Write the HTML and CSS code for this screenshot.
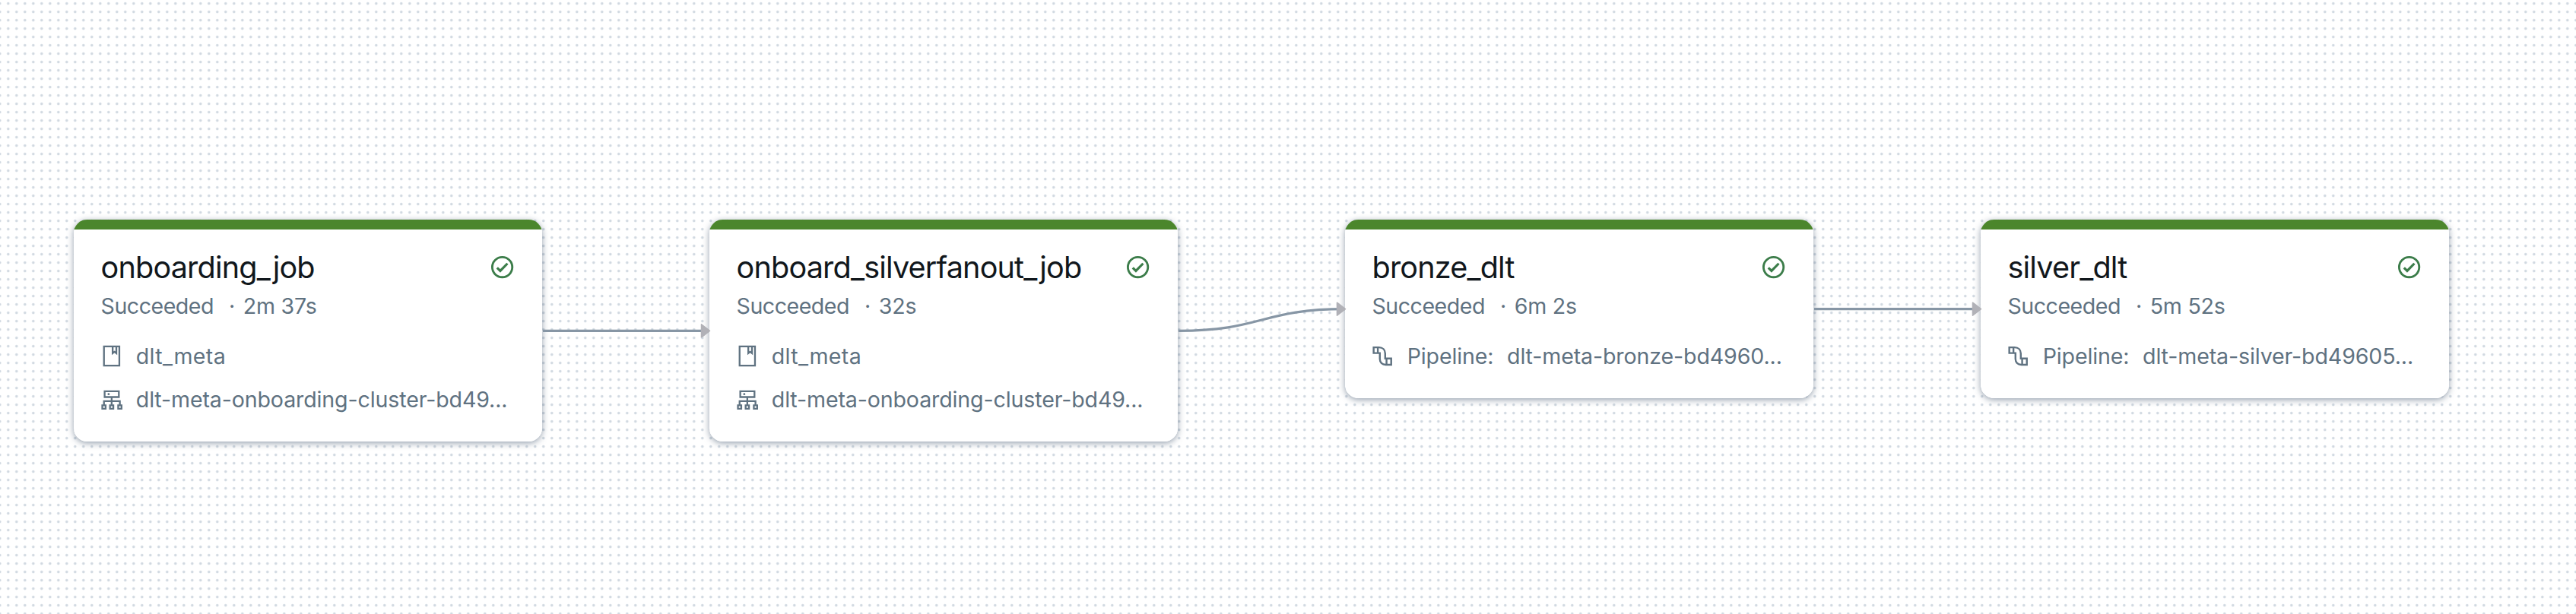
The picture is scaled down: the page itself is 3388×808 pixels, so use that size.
FILE: index.html
```
<!DOCTYPE html>
<html lang="en">
<head>
<meta charset="utf-8">
<title>Job graph</title>
<link rel="stylesheet" href="styles.css">
</head>
<body>
<svg class="defs" width="0" height="0" aria-hidden="true">
  <symbol id="check" viewBox="0 0 16 16"><circle cx="8" cy="8" r="6" fill="none" stroke="currentColor" stroke-width="1.3"/><path d="M4.9 8.3 6.8 10.2 11.1 5.8" fill="none" stroke="currentColor" stroke-width="1.45"/></symbol>
  <symbol id="notebook" viewBox="0 0 16 16"><path d="M1.7 2.2h9.2v11.5H1.7zM6.9 2.2v4.1l1.1-.9 1.1.9V2.2" fill="none" stroke="currentColor" stroke-width="1.05"/></symbol>
  <symbol id="cluster" viewBox="0 0 16 16"><path d="M2.1 2.65h8.5v3.5H2.1zM6.3 6.15v4.9M1.7 11.1V8.55h9.5v2.55M.7 11.1h2v2h-2zM5.3 11.1h2v2h-2zM10.2 11.1h2v2h-2z" fill="none" stroke="currentColor" stroke-width="1.05"/><circle cx="4.5" cy="4.4" r=".65" fill="currentColor"/></symbol>
  <symbol id="pipeline" viewBox="0 0 16 16"><path d="M1.2 2.8h3.2c2.2 0 3.7 1.5 3.7 3.700v2.900h3.600v3.800H8.400c-2.100 0-3.500-1.400-3.500-3.500V6.200H1.200zM3.700 2.800v3.400M8.900 9.400v3.800" fill="none" stroke="currentColor" stroke-width="1.1"/></symbol>
</svg>
<main class="canvas">
  <svg class="edges" width="3388" height="808" viewBox="0 0 3388 808">
    <path class="edge" d="M714 435.3H930"/>
    <path class="edge" d="M1550 435.3C1659.500 435.300 1659.500 406.700 1769 406.700"/>
    <path class="edge" d="M2386 406.700H2602"/>
    <path class="arrow" d="M922.500 426.800v17l11-8.500z"/>
    <path class="arrow" d="M1758.500 398.200v17l11-8.500z"/>
    <path class="arrow" d="M2594.500 398.200v17l11-8.500z"/>
  </svg>

  <article class="node node-onboarding">
    <header class="head"><h2 class="title">onboarding_job</h2><svg class="icon status"><use href="#check"/></svg></header>
    <div class="state"><span>Succeeded</span><span class="sep">·</span><span class="time">2m 37s</span></div>
    <div class="row"><svg class="icon"><use href="#notebook"/></svg><span class="source">dlt_meta</span></div>
    <div class="row"><svg class="icon"><use href="#cluster"/></svg><span>dlt-meta-onboarding-cluster-bd49...</span></div>
  </article>

  <article class="node node-fanout">
    <header class="head"><h2 class="title">onboard_silverfanout_job</h2><svg class="icon status"><use href="#check"/></svg></header>
    <div class="state"><span>Succeeded</span><span class="sep">·</span><span class="time">32s</span></div>
    <div class="row"><svg class="icon"><use href="#notebook"/></svg><span class="source">dlt_meta</span></div>
    <div class="row"><svg class="icon"><use href="#cluster"/></svg><span>dlt-meta-onboarding-cluster-bd49...</span></div>
  </article>

  <article class="node node-bronze">
    <header class="head"><h2 class="title">bronze_dlt</h2><svg class="icon status"><use href="#check"/></svg></header>
    <div class="state"><span>Succeeded</span><span class="sep">·</span><span class="time">6m 2s</span></div>
    <div class="row"><svg class="icon"><use href="#pipeline"/></svg><span class="label">Pipeline:</span><span>dlt-meta-bronze-bd4960...</span></div>
  </article>

  <article class="node node-silver">
    <header class="head"><h2 class="title">silver_dlt</h2><svg class="icon status"><use href="#check"/></svg></header>
    <div class="state"><span>Succeeded</span><span class="sep">·</span><span class="time">5m 52s</span></div>
    <div class="row"><svg class="icon"><use href="#pipeline"/></svg><span class="label">Pipeline:</span><span>dlt-meta-silver-bd49605...</span></div>
  </article>
</main>
</body>
</html>
```

FILE: styles.css
```
* { box-sizing: border-box; }
body { margin: 0; font-family: Inter, "Liberation Sans", sans-serif; }
.defs { position: absolute; }
.canvas {
  position: relative;
  width: 3388px;
  height: 808px;
  overflow: hidden;
  background-color: #fff;
  background-image: radial-gradient(circle at 5.5px 5.5px, #d1d9e1 1.3px, rgba(209, 217, 225, 0) 2.2px);
  background-size: 11px 11px;
  background-position: 5.3px -0.9px;
}
.edges { position: absolute; left: 0; top: 0; z-index: 1; }
.edge { fill: none; stroke: #8796a5; stroke-width: 3.3; }
.arrow { fill: #b1b1b7; stroke: #b1b1b7; stroke-width: 1.5; stroke-linejoin: round; }
.node {
  position: absolute;
  top: 289px;
  width: 616px;
  padding: 41px 35.2px 33px;
  overflow: hidden;
  border-radius: 17.6px;
  background: linear-gradient(#4b862c 13px, #fff 13px);
  box-shadow: 0 2px 8px rgba(40, 62, 90, 0.5);
  color: #5f7281;
  font-size: 28.6px;
  line-height: 44px;
  letter-spacing: -0.14px;
  white-space: nowrap;
}
.node-onboarding { left: 97.4px; }
.node-fanout { left: 933.4px; }
.node-bronze { left: 1769.3px; }
.node-silver { left: 2605.3px; }
.head { display: flex; align-items: center; justify-content: space-between; height: 44px; }
.title { margin: 0; color: #11171c; font-size: 39.6px; font-weight: 400; line-height: 44px; letter-spacing: -0.83px; }
.icon { flex: none; width: 35.2px; height: 35.2px; }
.status { color: #3c7d4a; }
.state { display: flex; margin: 7px 0 22px; letter-spacing: -0.5px; }
.sep { margin: 0 11px 0 20px; }
.time { letter-spacing: -0.25px; }
.row { display: flex; align-items: center; height: 44px; }
.row + .row { margin-top: 13.2px; }
.row .icon { margin-right: 11px; }
.source { letter-spacing: 0.35px; }
.label { margin-right: 17.6px; }
```
